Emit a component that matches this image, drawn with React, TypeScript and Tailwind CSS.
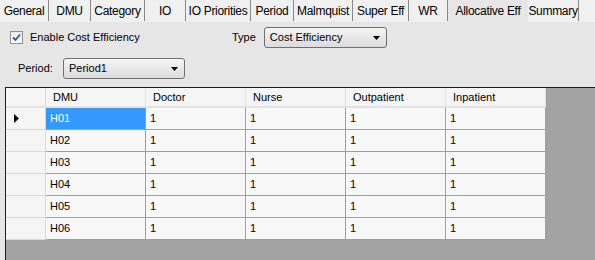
import React from 'react';

const tabs = [
    { label: 'General', w: 49 },
    { label: 'DMU', w: 42 },
    { label: 'Category', w: 54 },
    { label: 'IO', w: 41 },
    { label: 'IO Priorities', w: 65 },
    { label: 'Period', w: 43 },
    { label: 'Malmquist', w: 59 },
    { label: 'Super Eff', w: 56 },
    { label: 'WR', w: 39 },
    { label: 'Allocative Eff', w: 80, active: true },
    { label: 'Summary', w: 51 },
];

const columns = ['DMU', 'Doctor', 'Nurse', 'Outpatient', 'Inpatient'];
const rows = ['H01', 'H02', 'H03', 'H04', 'H05', 'H06'];

const Combo = ({ value, width }: { value: string; width: string }) => (
    <div
        className={`${width} h-[21px] flex items-center justify-between pl-[5px] pr-[6px] border border-[#707070] rounded-[3px] bg-gradient-to-b from-[#f4f4f4] to-[#dcdcdc]`}
    >
        <span>{value}</span>
        <svg width="7" height="4" viewBox="0 0 7 4">
            <path d="M0 0H7L3.5 4Z" fill="#000" />
        </svg>
    </div>
);

const App = () => {
    return (
        <div
            className="w-[595px] h-[260px] overflow-hidden flex flex-col bg-[#e6e6e6] text-[11px] text-black"
            style={{ fontFamily: '"Liberation Sans", Arial, sans-serif' }}
        >
            {/* tab strip */}
            <div className="h-[22px] flex bg-[#f0f0f0] shrink-0 text-[12px] tracking-[-0.3px]">
                {tabs.map((t) => (
                    <div
                        key={t.label}
                        className={
                            t.active
                                ? 'h-[22px] flex items-center justify-center bg-[#e6e6e6]'
                                : 'h-[21px] flex items-center justify-center bg-[#f0f0f0] border-r border-[#8a8a8a]'
                        }
                        style={{ width: t.w }}
                    >
                        {t.label}
                    </div>
                ))}
                <div className="flex-1 h-[21px]" />
            </div>

            {/* options */}
            <div className="flex items-center h-[21px] mt-[5px]">
                <div className="w-[13px] h-[13px] ml-[10px] border border-[#8e8f8f] bg-gradient-to-b from-[#ebebeb] to-white flex items-center justify-center">
                    <svg width="9" height="9" viewBox="0 0 9 9">
                        <path d="M1 4.5L3.5 7L8 1.5" stroke="#3a4f9c" strokeWidth="1.8" fill="none" />
                    </svg>
                </div>
                <span className="ml-[7px] w-[202px]">Enable Cost Efficiency</span>
                <span>Type</span>
                <div className="ml-[8px]">
                    <Combo value="Cost Efficiency" width="w-[123px]" />
                </div>
            </div>
            <div className="flex items-center h-[21px] mt-[10px]">
                <span className="ml-[18px] w-[45px]">Period:</span>
                <Combo value="Period1" width="w-[122px]" />
            </div>

            {/* data grid */}
            <div className="flex-1 mt-[8px] ml-[5px] border-t border-l border-[#1e1e1e] bg-[#a3a3a3]">
                <div className="inline-flex flex-col bg-[#f8f8f8]">
                    <div className="flex h-[20px] bg-[#f5f5f5] border-b-2 border-[#e2e2e2]">
                        <div className="w-[40px] border-r border-[#d6d6d6]" />
                        {columns.map((c) => (
                            <div key={c} className="w-[100px] pl-[7px] flex items-center border-r border-[#e2e2e2]">
                                {c}
                            </div>
                        ))}
                    </div>
                    {rows.map((r, i) => (
                        <div key={r} className="flex h-[22px]">
                            <div className="w-[40px] flex items-center pl-[8px] bg-[#f5f5f5] border-r border-b border-[#d9d9d9]">
                                {i === 0 && (
                                    <svg width="5" height="9" viewBox="0 0 5 9">
                                        <path d="M0 0L5 4.5L0 9Z" fill="#000" />
                                    </svg>
                                )}
                            </div>
                            <div
                                className={`w-[100px] pl-[4px] flex items-center border-r border-b border-[#a0a0a0] ${
                                    i === 0 ? 'bg-[#3399ff] text-white' : ''
                                }`}
                            >
                                {r}
                            </div>
                            {columns.slice(1).map((c) => (
                                <div key={c} className="w-[100px] pl-[4px] flex items-center border-r border-b border-[#a0a0a0]">
                                    1
                                </div>
                            ))}
                        </div>
                    ))}
                </div>
            </div>
        </div>
    );
};

export default App;
